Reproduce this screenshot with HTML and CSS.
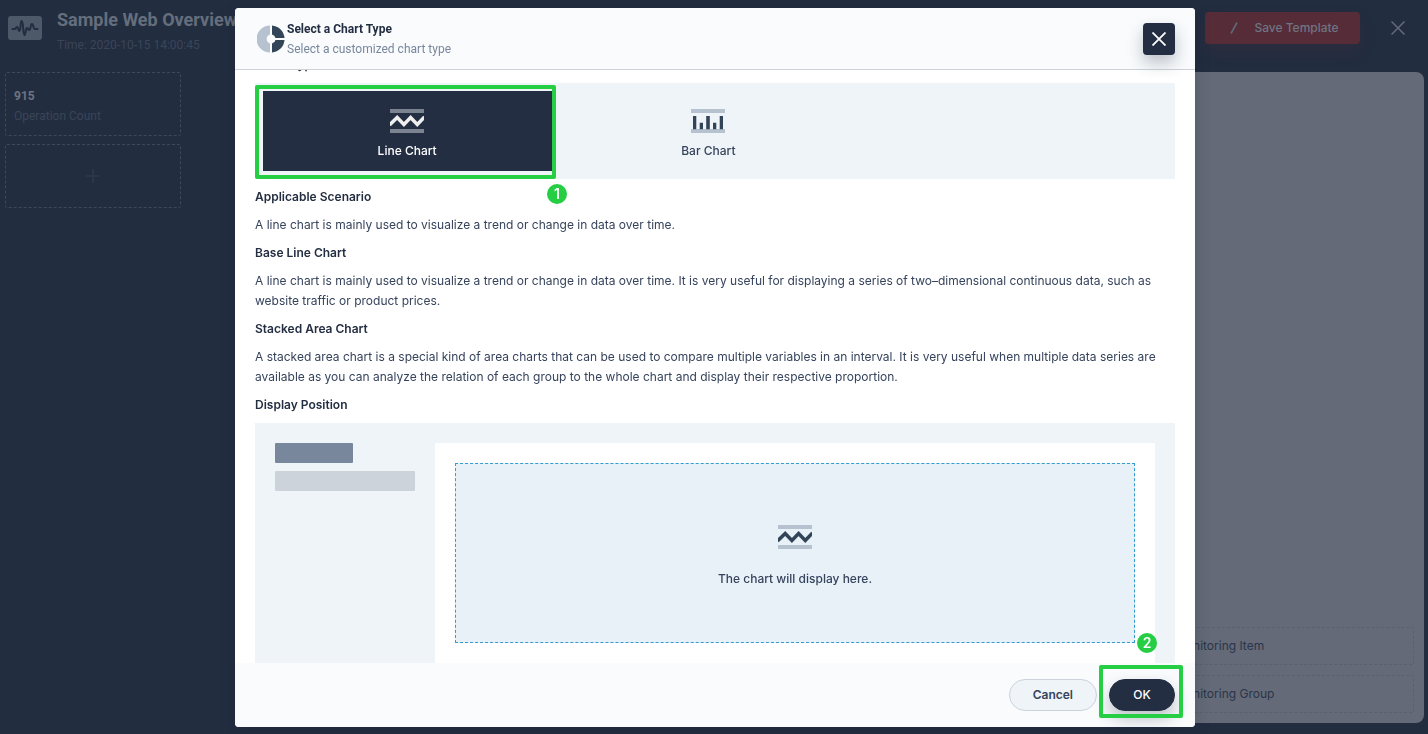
FILE: index.html
```html
<!DOCTYPE html>
<html lang="en">
<head>
<meta charset="utf-8">
<title>Sample Web Overview</title>
<link rel="stylesheet" href="styles.css">
</head>
<body>
<div class="page">
  <header class="topbar">
    <svg class="topbar-logo" width="34" height="24" viewBox="0 0 34 24" aria-hidden="true">
      <rect width="34" height="24" rx="3" fill="#4d5868"/>
      <path d="M4.500 13H6.500C8 13 8 11 9.200 11C10.500 11 10 15 11.300 15C13 15 12 5 13.700 5C15.500 5 14.800 19 16.500 19C18 19 17.300 12 19 12C20.500 12 20 14 21.200 14C22.800 14 22.300 8 24 8C25.700 8 25 13 27 13H29.500" fill="none" stroke="#232d40" stroke-width="2" stroke-linecap="round" stroke-linejoin="round"/>
    </svg>
    <div class="topbar-text">
      <h1 class="topbar-title">Sample Web Overview</h1>
      <p class="topbar-time">Time: 2020-10-15 14:00:45</p>
    </div>
    <button class="save" type="button">
      <svg width="8" height="12" viewBox="0 0 8 12" aria-hidden="true"><path d="M1 11.500L7 0.500" stroke="#5f6978" stroke-width="1.600"/></svg>
      Save Template
    </button>
    <button class="page-close" type="button" aria-label="Close editor">
      <svg width="14" height="14" viewBox="0 0 14 14" aria-hidden="true"><path d="M0.500 0.500L13.500 13.500M13.500 0.500L0.500 13.500" stroke="#636b79" stroke-width="1.500"/></svg>
    </button>
  </header>
  <div class="workspace">
    <aside class="side">
      <div class="stat">
        <strong class="stat-value">915</strong>
        <span class="stat-label">Operation Count</span>
      </div>
      <button class="stat-add" type="button" aria-label="Add statistic">
        <svg width="14" height="14" viewBox="0 0 14 14" aria-hidden="true"><path d="M7 0V14M0 7H14" stroke="#2c3a4d" stroke-width="1.500"/></svg>
      </button>
    </aside>
    <section class="panel">
      <button class="panel-item" type="button">Monitoring Item</button>
      <button class="panel-item" type="button">Monitoring Group</button>
    </section>
  </div>
</div>

<div class="overlay">
  <div class="modal" role="dialog" aria-labelledby="modal-title">
    <header class="modal-head">
      <svg class="modal-icon" width="28" height="28" viewBox="0 0 28 28" aria-hidden="true">
        <path d="M13 0.500A13.500 13.500 0 0 0 13 27.500V18.500A4.700 4.700 0 0 1 13 9.500Z" fill="#b6c2cf"/>
        <path d="M15 0.500A13.500 13.500 0 0 1 27.500 13H18.500A4.700 4.700 0 0 0 15 9.500Z" fill="#324558"/>
        <path d="M15 27.500A13.500 13.500 0 0 0 27.500 15H18.500A4.700 4.700 0 0 1 15 18.500Z" fill="#324558"/>
      </svg>
      <div class="modal-headtext">
        <h2 class="modal-title" id="modal-title">Select a Chart Type</h2>
        <p class="modal-sub">Select a customized chart type</p>
      </div>
      <button class="modal-close" type="button" aria-label="Close">
        <svg width="14" height="14" viewBox="0 0 14 14" aria-hidden="true"><path d="M0.500 0.500L13.500 13.500M13.500 0.500L0.500 13.500" stroke="#fff" stroke-width="1.800"/></svg>
      </button>
    </header>
    <div class="modal-body">
      <div class="content">
        <h3 class="heading">Chart Type</h3>
        <div class="options">
          <button class="option option-on" type="button" aria-pressed="true">
            <svg width="34" height="24" viewBox="0 0 34 24" aria-hidden="true"><path d="M0 0H34V4H0ZM0 20H34V24H0Z" fill="#7c8390"/><path d="M-0.500 16L7.200 8.500L13.900 15.500L20.600 8.500L27.300 15.500L34.500 8" fill="none" stroke="#efefef" stroke-width="3.500"/></svg>
            Line Chart
          </button>
          <button class="option" type="button" aria-pressed="false">
            <svg width="34" height="24" viewBox="0 0 34 24" aria-hidden="true"><path d="M0 0H34V4H0ZM0 20H34V24H0Z" fill="#b6c2cf"/><path d="M2 7H5.300V20.300H2ZM8.700 13.700H12V20.300H8.700ZM15.200 7H18.800V20.300H15.200ZM22 13.700H25.300V20.300H22ZM28.700 7H32V20.300H28.700Z" fill="#324558"/></svg>
            Bar Chart
          </button>
        </div>
        <h3 class="heading">Applicable Scenario</h3>
        <p class="para">A line chart is mainly used to visualize a trend or change in data over time.</p>
        <h3 class="heading">Base Line Chart</h3>
        <p class="para">A line chart is mainly used to visualize a trend or change in data over time. It is very useful for displaying a series of two–dimensional continuous data, such as website traffic or product prices.</p>
        <h3 class="heading">Stacked Area Chart</h3>
        <p class="para">A stacked area chart is a special kind of area charts that can be used to compare multiple variables in an interval. It is very useful when multiple data series are available as you can analyze the relation of each group to the whole chart and display their respective proportion.</p>
        <h3 class="heading">Display Position</h3>
        <div class="preview">
          <div class="preview-side">
            <div class="bar bar-dark"></div>
            <div class="bar"></div>
          </div>
          <div class="preview-main">
            <div class="drop">
              <svg width="34" height="24" viewBox="0 0 34 24" aria-hidden="true"><path d="M0 0H34V4H0ZM0 20H34V24H0Z" fill="#b6c2cf"/><path d="M-0.500 16L7.200 8.500L13.900 15.500L20.600 8.500L27.300 15.500L34.500 8" fill="none" stroke="#324558" stroke-width="3.500"/></svg>
              <p class="drop-text">The chart will display here.</p>
            </div>
          </div>
        </div>
      </div>
    </div>
    <footer class="modal-foot">
      <button class="btn" type="button">Cancel</button>
      <button class="btn btn-primary" type="button">OK</button>
    </footer>
    <div class="mark mark-one"></div>
    <span class="step step-one">1</span>
    <div class="mark mark-two"></div>
    <span class="step step-two">2</span>
  </div>
</div>
</body>
</html>
```
FILE: styles.css
```css
* { box-sizing: border-box; }
body {
  margin: 0;
  background: #222d40;
  color: #242e42;
  font: 12px/20px Inter, "Liberation Sans", sans-serif;
}
h1, h2, h3, p { margin: 0; }
button { font: inherit; cursor: pointer; }
svg { display: block; overflow: hidden; }

.page { display: flex; flex-direction: column; min-height: 100vh; padding: 0 4px 11px 5px; }
.topbar { display: flex; align-items: center; height: 56px; padding: 0 10px 0 3px; }
.topbar-text { flex: 1; margin-left: 15px; padding-top: 8px; font-family: Roboto, sans-serif; }
.topbar-title { font-size: 18px; line-height: 26px; font-weight: 700; color: #656e7c; white-space: nowrap; }
.topbar-time { font-size: 12px; line-height: 24px; color: #3b4558; }
.save {
  display: flex; align-items: center; justify-content: center; gap: 16px;
  width: 155px; height: 32px; padding: 0 0 0 4px; border: 0; border-radius: 4px;
  background: #552c38; color: #6f7482; font-weight: 500;
  box-shadow: 0 8px 16px rgba(85, 44, 56, .2);
}
.page-close { display: grid; place-items: center; width: 32px; height: 32px; margin-left: 22px; padding: 0; border: 0; background: none; }
.workspace { flex: 1; display: flex; gap: 64px; padding-top: 16px; }
.side { display: flex; flex-direction: column; gap: 8px; width: 176px; }
.stat, .stat-add { height: 64px; border: 1px dashed #3d485a; border-radius: 2px; }
.stat { display: flex; flex-direction: column; justify-content: center; padding: 4px 8px 0; font-family: Roboto, sans-serif; }
.stat-value { color: #6c7482; }
.stat-label { color: #3b4558; }
.stat-add { display: grid; place-items: center; background: none; }
.panel {
  flex: 1; display: flex; flex-direction: column; justify-content: flex-end; align-items: flex-end;
  gap: 10px; padding: 10px; border-radius: 8px; background: #646a77;
}
.panel-item {
  width: 264px; height: 38px; padding: 0 24px; border: 1px dashed #566173; border-radius: 2px;
  background: none; color: #2a354a; text-align: left;
}

.overlay { position: fixed; inset: 0; display: flex; justify-content: center; padding: 8px 6px 7px 8px; }
.modal {
  position: relative; display: flex; flex-direction: column; width: 100%; max-width: 960px;
  border-radius: 4px; background: #fff; box-shadow: 0 4px 16px rgba(20, 28, 44, .2);
}
.modal-head {
  position: relative; z-index: 1; display: flex; align-items: center; height: 62px; padding: 0 20px 0 22px;
  border-bottom: 1px solid #ccd3db; border-radius: 4px 4px 0 0; background: #f9fbfd;
}
.modal-headtext { flex: 1; margin-left: 2px; font-family: Roboto, sans-serif; }
.modal-title { font-size: 12px; line-height: 20px; font-weight: 700; }
.modal-sub { color: #79879c; }
.modal-close {
  display: grid; place-items: center; width: 32px; height: 32px; padding: 0; border: 0; border-radius: 4px;
  background: #242e42; box-shadow: 0 8px 16px rgba(36, 46, 66, .28);
}
.modal-body { flex: 1; min-height: 0; padding: 0 20px; overflow: hidden; }
.content { display: flex; flex-direction: column; gap: 8px; margin-top: -15px; }
.heading { font-size: 12px; line-height: 20px; font-weight: 600; }
.para { color: #36435c; }
.options { display: flex; gap: 12px; padding: 8px; background: #eff4f8; }
.option {
  display: flex; flex-direction: column; align-items: center; gap: 8px; width: 32%; height: 80px; padding: 18px 1px 0 0;
  border: 0; background: none; color: #36435c; font-weight: 500;
}
.option-on { background: #242e42; color: #fff; }
.preview { display: flex; gap: 20px; padding: 20px 20px 0; background: #eff4f8; }
.preview-side { display: flex; flex-direction: column; gap: 8px; width: 140px; }
.bar { height: 20px; border-radius: 1px; background: #ccd3db; }
.bar-dark { width: 78px; background: #79879c; }
.preview-main { flex: 1; padding: 20px; background: #fff; }
.drop {
  display: flex; flex-direction: column; align-items: center; justify-content: center; gap: 20px;
  height: 180px; padding-top: 8px; border: 1px dashed #329dce; background: #e8f1f8;
}
.drop-text { font-weight: 500; color: #36435c; }
.modal-foot {
  display: flex; align-items: center; justify-content: flex-end; gap: 12px; height: 64px; padding: 0 20px;
  border-radius: 0 0 4px 4px; background: #f9fbfd;
}
.btn {
  height: 32px; min-width: 66px; padding: 0 23px; border: 1px solid #ccd3db; border-radius: 16px;
  background: #eff4f9; color: #36435c; font-weight: 600;
}
.btn-primary { border-color: #242e42; background: #242e42; color: #fff; font-weight: 500; box-shadow: 0 8px 16px rgba(36, 46, 66, .28); }

.mark { position: absolute; z-index: 2; border: 4px solid #25ce42; border-radius: 2px; pointer-events: none; }
.mark-one { left: 20px; top: 77px; width: 301px; height: 94px; }
.mark-two { right: 12px; bottom: 9px; width: 84px; height: 53px; }
.step {
  position: absolute; z-index: 2; width: 20px; height: 20px; border-radius: 50%;
  background: #25ce42; color: #fff; font-size: 14px; font-weight: 600; text-align: center;
}
.step-one { left: 312px; top: 176px; }
.step-two { right: 38px; bottom: 74px; }
```
